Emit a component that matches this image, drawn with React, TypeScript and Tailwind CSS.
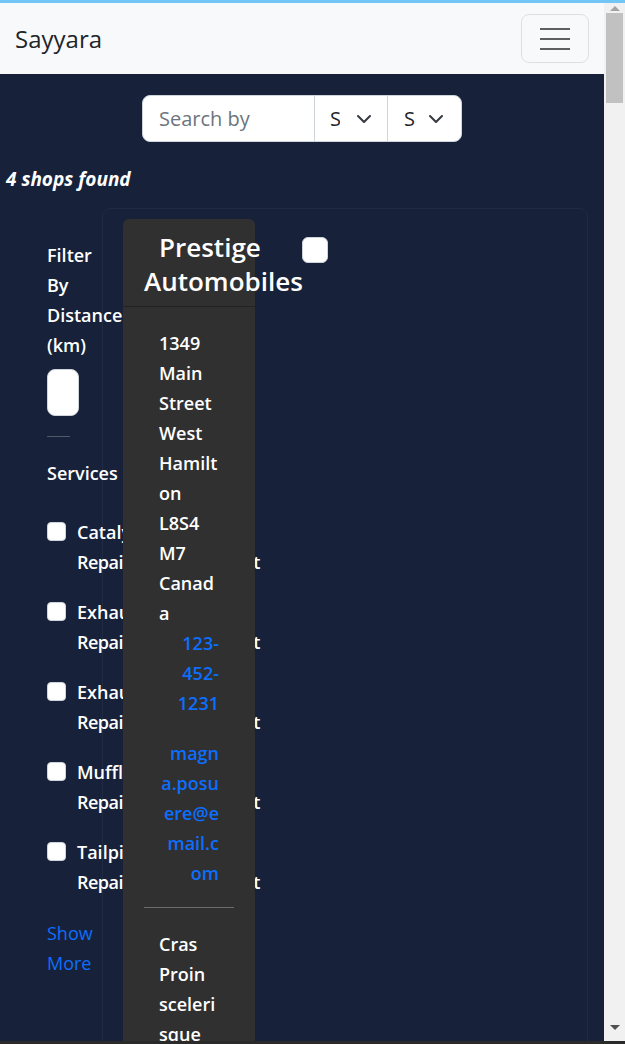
import React from "react";

const services = [
  ["Catalytic Converter", "Repair & Replacement"],
  ["Exhaust Manifold", "Repair & Replacement"],
  ["Exhaust Pipe", "Repair & Replacement"],
  ["Muffler", "Repair & Replacement"],
  ["Tailpipe", "Repair & Replacement"],
];

const address = ["1349", "Main", "Street", "West", "Hamilt", "on", "L8S4", "M7", "Canad", "a"];
const phone = ["123-", "452-", "1231"];
const email = ["magn", "a.posu", "ere@e", "mail.c", "om"];
const desc = ["Cras", "Proin", "sceleri", "sque", "ante", "sollicit", "udin", "commo", "do."];

function Chevron() {
  return (
    <svg width="16" height="16" viewBox="0 0 16 16" className="shrink-0">
      <path d="M2 5l6 6 6-6" fill="none" stroke="#343a40" strokeWidth="2" strokeLinecap="round" strokeLinejoin="round" />
    </svg>
  );
}

export default function App() {
  return (
    <div className="h-[1044px] overflow-hidden flex flex-col bg-[#17223a] font-['Open_Sans','Noto_Sans',sans-serif]">
      <div className="h-[3px] shrink-0 bg-[#72c6f6]" />
      <div className="flex flex-1 min-h-0">
        <main className="w-[604px] shrink-0 overflow-hidden bg-[#17223a]">
          {/* Navbar */}
          <nav className="h-[71px] bg-[#f8f9fa] flex items-center justify-between pl-[15px] pr-[15px]">
            <span className="text-[24px] text-[#212529] leading-none">Sayyara</span>
            <button className="w-[68px] h-[49px] border border-black/10 rounded-[8px] flex flex-col items-center justify-center gap-[8px]">
              <span className="block w-[30px] h-[2px] bg-[#5f5f5f]" />
              <span className="block w-[30px] h-[2px] bg-[#5f5f5f]" />
              <span className="block w-[30px] h-[2px] bg-[#5f5f5f]" />
            </button>
          </nav>

          {/* Search */}
          <div className="flex justify-center pt-[21px]">
            <div className="flex w-[320px] h-[47px] border border-[#ced4da] rounded-[8px] bg-white overflow-hidden">
              <div className="w-[172px] shrink-0 border-r border-[#ced4da] flex items-center pl-[16px] text-[20px] text-[#6c757d]">
                Search by
              </div>
              <div className="w-[73px] shrink-0 border-r border-[#ced4da] flex items-center pl-[15px]">
                <div className="w-[10px] overflow-hidden whitespace-nowrap text-[20px] text-[#212529]">Shops</div>
                <div className="ml-[16px]"><Chevron /></div>
              </div>
              <div className="flex-1 flex items-center pl-[16px]">
                <div className="w-[12px] overflow-hidden whitespace-nowrap text-[20px] text-[#212529]">Sort</div>
                <div className="ml-[12px]"><Chevron /></div>
              </div>
            </div>
          </div>

          <div className="mt-[22px] pl-[6px] text-[19px] leading-[30px] italic font-bold text-white">4 shops found</div>

          {/* Results container */}
          <div className="mt-[14px] ml-[102px] w-[486px] h-[900px] border border-[#202b43] rounded-[8px] flex items-start pt-[10px]">
            {/* Filters */}
            <div className="-ml-[56px] w-[76px] shrink-0 mt-[21px] text-[18px] leading-[30px] font-semibold text-white">
              <div>Filter</div>
              <div>By</div>
              <div className="whitespace-nowrap">Distance</div>
              <div>(km)</div>
              <div className="mt-[9px] w-[32px] h-[47px] bg-white rounded-[8px] border border-[#ced4da]" />
              <div className="mt-[20px] w-[23px] h-px bg-white/25" />
              <div className="mt-[21px]">Services</div>
              <div className="mt-[29px] flex flex-col gap-[20px]">
                {services.map(([a, b]) => (
                  <div key={a} className="flex gap-[11px]">
                    <span className="mt-[5px] w-[19px] h-[19px] shrink-0 bg-white rounded-[4px] border border-[#ced4da]" />
                    <div className="whitespace-nowrap">
                      <div>{a}</div>
                      <div className="tracking-[-0.5px]">{b}</div>
                    </div>
                  </div>
                ))}
              </div>
              <div className="mt-[21px] font-medium text-[#0d6efd]">
                <div>Show</div>
                <div>More</div>
              </div>
            </div>

            {/* Shop card */}
            <div className="relative z-10 w-[132px] shrink-0 bg-[#303030] rounded-[6px] min-h-[1000px] text-white">
              <div className="flex px-[21px] pt-[12px] pb-[8px] border-b border-[#232323]">
                <div className="w-[158px] shrink-0 text-[26px] leading-[33.6px] font-semibold">
                  <div className="pl-[15px] whitespace-nowrap">Prestige</div>
                  <div className="whitespace-nowrap">Automobiles</div>
                </div>
                <span className="mt-[6px] w-[26px] h-[26px] shrink-0 bg-white rounded-[6px] border border-[#ced4da]" />
              </div>
              <div className="px-[21px] pt-[21px] text-[18px] leading-[30px] font-semibold">
                <div className="px-[15px]">
                  {address.map((l, i) => (
                    <div key={i} className="whitespace-nowrap">{l}</div>
                  ))}
                  {phone.map((l, i) => (
                    <div key={i} className="text-right text-[#0d6efd] whitespace-nowrap">{l}</div>
                  ))}
                  <div className="mt-[20px]">
                    {email.map((l, i) => (
                      <div key={i} className="text-right text-[#0d6efd] whitespace-nowrap">{l}</div>
                    ))}
                  </div>
                </div>
                <div className="mt-[19px] h-px bg-[#6b6b6b]" />
                <div className="px-[15px] mt-[21px]">
                  {desc.map((l, i) => (
                    <div key={i} className="whitespace-nowrap">{l}</div>
                  ))}
                </div>
              </div>
            </div>
          </div>
        </main>

        {/* Scrollbar */}
        <div className="w-[21px] shrink-0 bg-[#f1f1f1] flex flex-col items-center">
          <div className="h-[10px] flex items-center justify-center">
            <svg width="10" height="5" viewBox="0 0 10 5"><path d="M0 5L5 0L10 5Z" fill="#a3a3a3" /></svg>
          </div>
          <div className="w-[17px] h-[90px] bg-[#c1c1c1]" />
          <div className="flex-1" />
          <div className="h-[16px] flex items-start justify-center">
            <svg width="10" height="5" viewBox="0 0 10 5"><path d="M0 0L5 5L10 0Z" fill="#505050" /></svg>
          </div>
        </div>
      </div>
      <div className="h-[3px] shrink-0 bg-[#2a2a2a]" />
    </div>
  );
}
